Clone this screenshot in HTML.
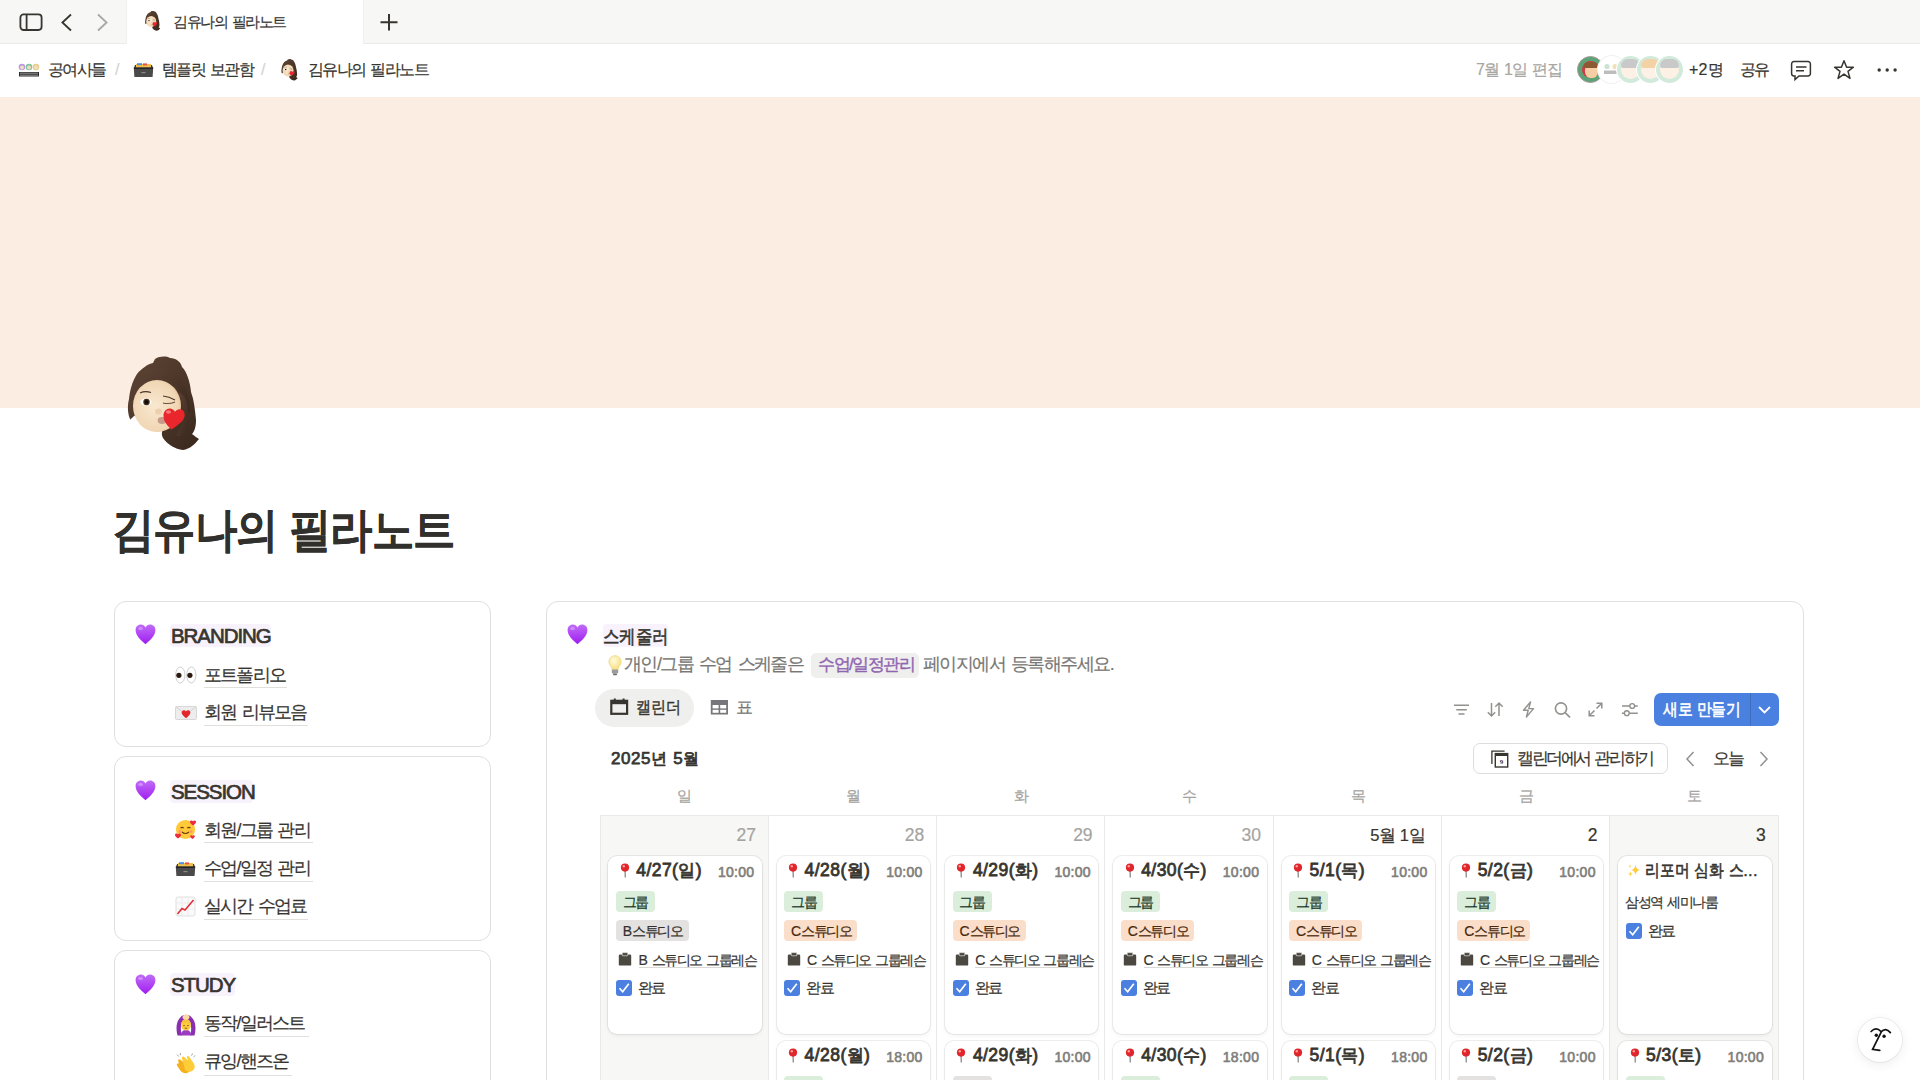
<!DOCTYPE html>
<html lang="ko">
<head>
<meta charset="utf-8">
<title>김유나의 필라노트</title>
<style>
*{box-sizing:border-box;margin:0;padding:0}
html,body{width:1920px;height:1080px;overflow:hidden;background:#fff}
body{font-family:"Liberation Sans",sans-serif;color:#37352f;position:relative}
.a{position:absolute;display:block}
.t{position:absolute;white-space:nowrap;line-height:1}
.ko{letter-spacing:-0.1em;word-spacing:0.12em}
.t{-webkit-text-stroke-width:0.2px}
.sb{-webkit-text-stroke-width:0.6px}
.md{-webkit-text-stroke-width:0.4px}
.b{font-weight:700}
.box{position:absolute;border:1px solid #e0dfdd;border-radius:12px;background:#fff}
.lat{letter-spacing:0}
.ul{position:absolute;height:1px;background:#dedcd9}
.card{position:absolute;background:#fff;border-radius:9px;box-shadow:0 0 0 1px rgba(15,15,15,.07),0 2px 4px rgba(15,15,15,.05)}
.tag{position:absolute;border-radius:4px}
</style>
</head>
<body>

<div class="a" style="left:0.0px;top:0.0px;width:1920.0px;height:44.0px;background:#f7f7f5;border-bottom:1px solid #ebebe9"></div>
<div class="a" style="left:126.0px;top:0.0px;width:238.0px;height:44.0px;background:#fff;border-left:1px solid #efefed;border-right:1px solid #efefed"></div>
<svg class="a" style="left:19.0px;top:13.0px;" width="25" height="19" viewBox="0 0 25 19"><rect x="1.4" y="1.4" width="21.2" height="15.6" rx="3.2" fill="none" stroke="#37352f" stroke-width="1.8"/><line x1="7.6" y1="1.4" x2="7.6" y2="17" stroke="#37352f" stroke-width="1.8"/></svg>
<svg class="a" style="left:60.0px;top:13.0px;" width="14" height="19" viewBox="0 0 14 19"><path d="M11 1.5 L2.4 9.5 L11 17.5" fill="none" stroke="#37352f" stroke-width="1.8"/></svg>
<svg class="a" style="left:95.0px;top:13.0px;" width="14" height="19" viewBox="0 0 14 19"><path d="M3 1.5 L11.6 9.5 L3 17.5" fill="none" stroke="#a9a8a5" stroke-width="1.8"/></svg>
<svg class="a" style="left:143.0px;top:10.0px;" width="19" height="22" viewBox="0 0 90 104"><defs><radialGradient id="fc" cx=".45" cy=".5" r=".6"><stop offset="0" stop-color="#f9e8d0"/><stop offset=".8" stop-color="#f0d6b4"/><stop offset="1" stop-color="#e2b98e"/></radialGradient><linearGradient id="hr" x1="0" y1="0" x2="1" y2="1"><stop offset="0" stop-color="#5e4535"/><stop offset="1" stop-color="#3a281d"/></linearGradient></defs><path d="M37 7C42 4 48 4 52 6 58 6 63 10 64 15 69 20 72 30 73 40 76 48 77 58 78 68 78 76 76 80 74 82 77 84 79 86 81 87 77 92 72 97 65 98 57 97 50 93 45 86 43 82 44 78 46 75L40 60 16 64C13 67 12 68 12 67 10 62 9 55 11 47 12 38 14 30 19 22 24 16 30 12 35 11Z" fill="url(#hr)"/><ellipse cx="39" cy="54" rx="24" ry="26" fill="url(#fc)"/><path d="M14 46C16 34 24 27 34 26 46 25 56 30 62 40 66 48 67 56 67 62 L72 60C72 46 68 32 60 24 52 16 40 14 30 17 20 21 14 32 14 46Z" fill="url(#hr)"/><path d="M60 40C64 48 66 58 64 70 63 76 60 80 58 84 L66 84C70 76 71 66 70 56 69 48 66 42 60 40Z" fill="url(#hr)"/><path d="M22 41Q27 38.5 33 40.5" stroke="#4a3628" stroke-width="1.1" fill="none"/><path d="M45 44Q51 44.5 57 48" stroke="#4a3628" stroke-width="1.1" fill="none"/><ellipse cx="28" cy="50" rx="5.6" ry="3.6" fill="#fff"/><circle cx="28.5" cy="50" r="3.2" fill="#3b2a1c"/><circle cx="28.5" cy="50" r="1.8" fill="#0d0906"/><path d="M45 51Q51 52.5 57 50" stroke="#6a5040" stroke-width="1.1" fill="none"/><ellipse cx="40.5" cy="59.5" rx="3.4" ry="3" fill="#ecd0ae"/><ellipse cx="44" cy="68.5" rx="4.3" ry="3.4" fill="#c79a8a"/><path d="M53.5 77.5C47.5 72 45.5 68.5 45.5 63.5 45.5 59.5 48.3 56.5 51.8 56.5c2.3 0 4.1 1.3 5.2 3.2C58.2 58 60.2 57 62.3 57.3 65.3 57.8 67.2 60.6 66.6 64 65.8 69 61 72.5 53.5 77.5z" fill="#e8262c"/><ellipse cx="50.5" cy="60" rx="2.6" ry="1.7" fill="#ff9090" opacity=".75"/></svg>
<div class="t ko" style="left:173.0px;top:14.5px;font-size:14.6px;letter-spacing:-0.1em">김유나의 필라노트</div>
<svg class="a" style="left:379.0px;top:12.0px;" width="20" height="20" viewBox="0 0 20 20"><path d="M10 2V18.5M1.5 10.2H18.5" stroke="#37352f" stroke-width="2"/></svg>
<svg class="a" style="left:18.0px;top:63.0px;" width="22" height="14" viewBox="0 0 22 14"><circle cx="4" cy="4" r="3.3" fill="#b99be0"/><circle cx="11" cy="4" r="3.3" fill="#7fc69a"/><circle cx="18" cy="4" r="3.3" fill="#e8cf8a"/><circle cx="4" cy="4.6" r="2" fill="#f3dcc4"/><circle cx="11" cy="4.6" r="2" fill="#f3dcc4"/><circle cx="18" cy="4.6" r="2" fill="#f3dcc4"/><rect x="1" y="9" width="20" height="4.5" fill="#2d2d2d"/><path d="M2 10.2H20M2 12.2H20" stroke="#fff" stroke-width=".5"/></svg>
<div class="t ko" style="left:48.0px;top:61.5px;font-size:16px;">공여사들</div>
<div class="t " style="left:115.0px;top:61.5px;font-size:16px;color:#d5d4d0">/</div>
<svg class="a" style="left:133.0px;top:61.0px;" width="21" height="17" viewBox="0 0 21 17"><path d="M2 4 L19 4 L20 7 L1 7Z" fill="#3a3a3a"/><rect x="3" y="3" width="15" height="4" fill="#f1c04a"/><rect x="4" y="2.2" width="5" height="2" fill="#4b8fe0"/><rect x="10" y="2.4" width="4" height="2" fill="#e2544b"/><path d="M0.8 6.5 L20.2 6.5 L19.6 16 L1.4 16Z" fill="#4a4a4a"/><path d="M0.8 6.5 L20.2 6.5 L20 8 L1 8Z" fill="#262626"/><rect x="8.5" y="11" width="4" height="1.2" fill="#8a8a8a"/></svg>
<div class="t ko" style="left:162.0px;top:61.5px;font-size:16px;">템플릿 보관함</div>
<div class="t " style="left:261.0px;top:61.5px;font-size:16px;color:#d5d4d0">/</div>
<svg class="a" style="left:279.0px;top:58.0px;" width="21" height="24" viewBox="0 0 90 104"><defs><radialGradient id="fc" cx=".45" cy=".5" r=".6"><stop offset="0" stop-color="#f9e8d0"/><stop offset=".8" stop-color="#f0d6b4"/><stop offset="1" stop-color="#e2b98e"/></radialGradient><linearGradient id="hr" x1="0" y1="0" x2="1" y2="1"><stop offset="0" stop-color="#5e4535"/><stop offset="1" stop-color="#3a281d"/></linearGradient></defs><path d="M37 7C42 4 48 4 52 6 58 6 63 10 64 15 69 20 72 30 73 40 76 48 77 58 78 68 78 76 76 80 74 82 77 84 79 86 81 87 77 92 72 97 65 98 57 97 50 93 45 86 43 82 44 78 46 75L40 60 16 64C13 67 12 68 12 67 10 62 9 55 11 47 12 38 14 30 19 22 24 16 30 12 35 11Z" fill="url(#hr)"/><ellipse cx="39" cy="54" rx="24" ry="26" fill="url(#fc)"/><path d="M14 46C16 34 24 27 34 26 46 25 56 30 62 40 66 48 67 56 67 62 L72 60C72 46 68 32 60 24 52 16 40 14 30 17 20 21 14 32 14 46Z" fill="url(#hr)"/><path d="M60 40C64 48 66 58 64 70 63 76 60 80 58 84 L66 84C70 76 71 66 70 56 69 48 66 42 60 40Z" fill="url(#hr)"/><path d="M22 41Q27 38.5 33 40.5" stroke="#4a3628" stroke-width="1.1" fill="none"/><path d="M45 44Q51 44.5 57 48" stroke="#4a3628" stroke-width="1.1" fill="none"/><ellipse cx="28" cy="50" rx="5.6" ry="3.6" fill="#fff"/><circle cx="28.5" cy="50" r="3.2" fill="#3b2a1c"/><circle cx="28.5" cy="50" r="1.8" fill="#0d0906"/><path d="M45 51Q51 52.5 57 50" stroke="#6a5040" stroke-width="1.1" fill="none"/><ellipse cx="40.5" cy="59.5" rx="3.4" ry="3" fill="#ecd0ae"/><ellipse cx="44" cy="68.5" rx="4.3" ry="3.4" fill="#c79a8a"/><path d="M53.5 77.5C47.5 72 45.5 68.5 45.5 63.5 45.5 59.5 48.3 56.5 51.8 56.5c2.3 0 4.1 1.3 5.2 3.2C58.2 58 60.2 57 62.3 57.3 65.3 57.8 67.2 60.6 66.6 64 65.8 69 61 72.5 53.5 77.5z" fill="#e8262c"/><ellipse cx="50.5" cy="60" rx="2.6" ry="1.7" fill="#ff9090" opacity=".75"/></svg>
<div class="t ko" style="left:308.0px;top:61.5px;font-size:16px;">김유나의 필라노트</div>
<div class="t ko" style="left:1476.0px;top:61.5px;font-size:16px;color:#a7a6a2;letter-spacing:-0.07em">7월 1일 편집</div>
<div class="a" style="left:1577px;top:56px;width:27px;height:27px;border-radius:50%;background:#5aa477;border:1px solid #a99;overflow:hidden"><div class="a" style="left:4px;top:4px;width:17px;height:17px;border-radius:50%;background:#d13a44"></div><div class="a" style="left:7px;top:7px;width:13px;height:14px;border-radius:45%;background:#f5cfa3"></div><div class="a" style="left:6px;top:5px;width:14px;height:6px;border-radius:6px 6px 2px 2px;background:#8b5a33"></div></div>
<div class="a" style="left:1598px;top:56px;width:27px;height:27px;border-radius:50%;background:#fff;box-shadow:0 0 0 1px #f0f0f0"></div>
<svg class="a" style="left:1603.0px;top:63.0px;" width="17" height="12" viewBox="0 0 17 12"><circle cx="4" cy="3.5" r="2.6" fill="#cde3d2"/><circle cx="12" cy="3.5" r="2.6" fill="#efe2b8"/><rect x="1" y="7.5" width="15" height="3.5" fill="#bdbdbd"/></svg>
<div class="a" style="left:1617.1px;top:56px;width:27px;height:27px;border-radius:50%;background:#d2eadb;box-shadow:0 0 0 1px #fff"><div class="a" style="left:4px;top:4px;width:19px;height:19px;border-radius:50%;background:#fdf1e6"></div><div class="a" style="left:4px;top:3px;width:19px;height:9px;border-radius:9px 9px 3px 3px;background:#c9c9c9"></div></div>
<div class="a" style="left:1636.6px;top:56px;width:27px;height:27px;border-radius:50%;background:#d2eadb;box-shadow:0 0 0 1px #fff"><div class="a" style="left:4px;top:4px;width:19px;height:19px;border-radius:50%;background:#fdf1e6"></div><div class="a" style="left:4px;top:3px;width:19px;height:9px;border-radius:9px 9px 3px 3px;background:#f3d2a6"></div></div>
<div class="a" style="left:1656.1px;top:56px;width:27px;height:27px;border-radius:50%;background:#d2eadb;box-shadow:0 0 0 1px #fff"><div class="a" style="left:4px;top:4px;width:19px;height:19px;border-radius:50%;background:#fdf1e6"></div><div class="a" style="left:4px;top:3px;width:19px;height:9px;border-radius:9px 9px 3px 3px;background:#c9c9c9"></div></div>
<div class="t ko" style="left:1689.0px;top:61.5px;font-size:16px;letter-spacing:0.01em">+2명</div>
<div class="t ko" style="left:1740.0px;top:61.5px;font-size:16px;">공유</div>
<svg class="a" style="left:1790.0px;top:60.0px;" width="22" height="22" viewBox="0 0 22 22"><path d="M4 1.6H18a2.4 2.4 0 0 1 2.4 2.4V13.6A2.4 2.4 0 0 1 18 16H9L5 19.6V16H4A2.4 2.4 0 0 1 1.6 13.6V4A2.4 2.4 0 0 1 4 1.6Z" fill="none" stroke="#37352f" stroke-width="1.5"/><path d="M6 7H16.5M6 10.8H14" stroke="#37352f" stroke-width="1.5"/></svg>
<svg class="a" style="left:1833.0px;top:59.0px;" width="22" height="22" viewBox="0 0 22 22"><path d="M11 1.8L13.6 8.2H20.4L15 12.4L17 19.4L11 15.2L5 19.4L7 12.4L1.6 8.2H8.4Z" fill="none" stroke="#37352f" stroke-width="1.5" stroke-linejoin="round"/></svg>
<svg class="a" style="left:1875.0px;top:66.0px;" width="24" height="8" viewBox="0 0 24 8"><circle cx="4.2" cy="4" r="1.7" fill="#37352f"/><circle cx="12.2" cy="4" r="1.7" fill="#37352f"/><circle cx="20.1" cy="4" r="1.7" fill="#37352f"/></svg>
<div class="a" style="left:0.0px;top:97.0px;width:1920.0px;height:311.0px;background:#fcede2"></div>
<svg class="a" style="left:118.0px;top:352.0px;" width="90" height="104" viewBox="0 0 90 104"><defs><radialGradient id="fc" cx=".45" cy=".5" r=".6"><stop offset="0" stop-color="#f9e8d0"/><stop offset=".8" stop-color="#f0d6b4"/><stop offset="1" stop-color="#e2b98e"/></radialGradient><linearGradient id="hr" x1="0" y1="0" x2="1" y2="1"><stop offset="0" stop-color="#5e4535"/><stop offset="1" stop-color="#3a281d"/></linearGradient></defs><path d="M37 7C42 4 48 4 52 6 58 6 63 10 64 15 69 20 72 30 73 40 76 48 77 58 78 68 78 76 76 80 74 82 77 84 79 86 81 87 77 92 72 97 65 98 57 97 50 93 45 86 43 82 44 78 46 75L40 60 16 64C13 67 12 68 12 67 10 62 9 55 11 47 12 38 14 30 19 22 24 16 30 12 35 11Z" fill="url(#hr)"/><ellipse cx="39" cy="54" rx="24" ry="26" fill="url(#fc)"/><path d="M14 46C16 34 24 27 34 26 46 25 56 30 62 40 66 48 67 56 67 62 L72 60C72 46 68 32 60 24 52 16 40 14 30 17 20 21 14 32 14 46Z" fill="url(#hr)"/><path d="M60 40C64 48 66 58 64 70 63 76 60 80 58 84 L66 84C70 76 71 66 70 56 69 48 66 42 60 40Z" fill="url(#hr)"/><path d="M22 41Q27 38.5 33 40.5" stroke="#4a3628" stroke-width="1.1" fill="none"/><path d="M45 44Q51 44.5 57 48" stroke="#4a3628" stroke-width="1.1" fill="none"/><ellipse cx="28" cy="50" rx="5.6" ry="3.6" fill="#fff"/><circle cx="28.5" cy="50" r="3.2" fill="#3b2a1c"/><circle cx="28.5" cy="50" r="1.8" fill="#0d0906"/><path d="M45 51Q51 52.5 57 50" stroke="#6a5040" stroke-width="1.1" fill="none"/><ellipse cx="40.5" cy="59.5" rx="3.4" ry="3" fill="#ecd0ae"/><ellipse cx="44" cy="68.5" rx="4.3" ry="3.4" fill="#c79a8a"/><path d="M53.5 77.5C47.5 72 45.5 68.5 45.5 63.5 45.5 59.5 48.3 56.5 51.8 56.5c2.3 0 4.1 1.3 5.2 3.2C58.2 58 60.2 57 62.3 57.3 65.3 57.8 67.2 60.6 66.6 64 65.8 69 61 72.5 53.5 77.5z" fill="#e8262c"/><ellipse cx="50.5" cy="60" rx="2.6" ry="1.7" fill="#ff9090" opacity=".75"/></svg>
<div class="t b" style="left:112.0px;top:506.0px;font-size:47px;color:#32302c;letter-spacing:-0.02em;transform:scaleX(0.9);transform-origin:0 50%">김유나의 필라노트</div>
<div class="box" style="left:114px;top:601px;width:377px;height:146px"></div>
<div class="box" style="left:114px;top:756px;width:377px;height:185px"></div>
<div class="box" style="left:114px;top:950px;width:377px;height:200px"></div>
<svg class="a" style="left:134.5px;top:624.0px;" width="21" height="21" viewBox="0 0 21 21"><defs><linearGradient id="gp" x1="0" y1="0" x2="0" y2="1"><stop offset="0" stop-color="#c06cf7"/><stop offset="1" stop-color="#a01cf0"/></linearGradient></defs><path d="M10.5 20.3C4.3 14.8 0.6 11.2 0.6 6.1 0.6 2.9 3 0.6 5.9 0.6c2.1 0 3.7 1.1 4.6 2.9C11.4 1.7 13 0.6 15.1 0.6c2.9 0 5.3 2.3 5.3 5.5 0 5.1-3.7 8.7-9.9 14.2z" fill="url(#gp)"/><ellipse cx="5.6" cy="4.6" rx="2.4" ry="1.5" fill="#e3b8ff" opacity=".55"/></svg>
<div class="a" style="left:170.0px;top:624.0px;width:101.0px;height:23.0px;background:#f7f2fb;border-radius:4px"></div>
<div class="t sb" style="left:171.0px;top:625.8px;font-size:20.5px;letter-spacing:-0.052em;-webkit-text-stroke-width:0.7px">BRANDING</div>
<svg class="a" style="left:175.0px;top:666.0px;" width="22" height="18" viewBox="0 0 22 18"><ellipse cx="5.3" cy="9" rx="4.6" ry="8" fill="#fff" stroke="#cfcfcf" stroke-width="1"/><ellipse cx="16.3" cy="9" rx="4.6" ry="8" fill="#fff" stroke="#cfcfcf" stroke-width="1"/><circle cx="3.9" cy="9.3" r="2.6" fill="#2a1a10"/><circle cx="14.9" cy="9.3" r="2.6" fill="#2a1a10"/></svg>
<div class="t ko" style="left:204.0px;top:665.5px;font-size:18px;">포트폴리오</div>
<div class="a" style="left:204.0px;top:687.0px;width:83.0px;height:1.0px;background:#e0dfdc"></div>
<svg class="a" style="left:175.0px;top:706.0px;" width="22" height="14" viewBox="0 0 22 14"><rect x="0.5" y="0.5" width="21" height="13" rx="1" fill="#ededed" stroke="#d7d7d7"/><path d="M0.8 0.8 11 8 21.2 0.8" fill="none" stroke="#d0d0d0"/><path d="M11 12.2C8 9.8 6.6 8.5 6.6 6.6 6.6 5.3 7.6 4.3 8.8 4.3c0.9 0 1.7 0.5 2.2 1.3 0.5-0.8 1.3-1.3 2.2-1.3 1.2 0 2.2 1 2.2 2.3 0 1.9-1.4 3.2-4.4 5.6z" fill="#e3252c"/></svg>
<div class="t ko" style="left:204.0px;top:703.0px;font-size:18px;">회원 리뷰모음</div>
<div class="a" style="left:204.0px;top:725.0px;width:104.0px;height:1.0px;background:#e0dfdc"></div>
<svg class="a" style="left:134.5px;top:780.0px;" width="21" height="21" viewBox="0 0 21 21"><defs><linearGradient id="gp" x1="0" y1="0" x2="0" y2="1"><stop offset="0" stop-color="#c06cf7"/><stop offset="1" stop-color="#a01cf0"/></linearGradient></defs><path d="M10.5 20.3C4.3 14.8 0.6 11.2 0.6 6.1 0.6 2.9 3 0.6 5.9 0.6c2.1 0 3.7 1.1 4.6 2.9C11.4 1.7 13 0.6 15.1 0.6c2.9 0 5.3 2.3 5.3 5.5 0 5.1-3.7 8.7-9.9 14.2z" fill="url(#gp)"/><ellipse cx="5.6" cy="4.6" rx="2.4" ry="1.5" fill="#e3b8ff" opacity=".55"/></svg>
<div class="a" style="left:170.0px;top:780.0px;width:83.0px;height:23.0px;background:#f7f2fb;border-radius:4px"></div>
<div class="t sb" style="left:171.0px;top:781.8px;font-size:20.5px;letter-spacing:-0.052em;-webkit-text-stroke-width:0.7px">SESSION</div>
<svg class="a" style="left:175.0px;top:819.0px;" width="21" height="21" viewBox="0 0 21 21"><circle cx="10.5" cy="10.5" r="9.6" fill="#ffc93a"/><path d="M5.5 9.2q1.6-1.6 3.2 0M12.3 9.2q1.6-1.6 3.2 0" stroke="#6b3e12" stroke-width="1.2" fill="none"/><path d="M7 13q3.5 3 7 0" stroke="#6b3e12" stroke-width="1.2" fill="none"/><circle cx="5" cy="12.5" r="1.6" fill="#ff8a7a" opacity=".7"/><circle cx="16" cy="12.5" r="1.6" fill="#ff8a7a" opacity=".7"/><path d="M3 19.5C1 18 0 17 0 15.8 0 15 .6 14.4 1.4 14.4c.6 0 1.1.3 1.6.9.5-.6 1-.9 1.6-.9.8 0 1.4.6 1.4 1.4 0 1.2-1 2.2-3 3.7z" fill="#ee2a3c"/><path d="M18 6.5C16 5 15 4 15 2.8 15 2 15.6 1.4 16.4 1.4c.6 0 1.1.3 1.6.9.5-.6 1-.9 1.6-.9.8 0 1.4.6 1.4 1.4 0 1.2-1 2.2-3 3.7z" fill="#ee2a3c"/><path d="M17.5 20C16 19 15.2 18.2 15.2 17.3c0-.6.5-1.1 1.1-1.1.5 0 .9.3 1.2.7.3-.4.7-.7 1.2-.7.6 0 1.1.5 1.1 1.1 0 .9-.8 1.7-2.3 2.7z" fill="#ee2a3c"/></svg>
<div class="t ko" style="left:204.0px;top:820.5px;font-size:18px;">회원/그룹 관리</div>
<div class="a" style="left:204.0px;top:842.0px;width:109.0px;height:1.0px;background:#e0dfdc"></div>
<svg class="a" style="left:175.0px;top:860.0px;" width="21" height="17" viewBox="0 0 21 17"><path d="M2 4 L19 4 L20 7 L1 7Z" fill="#3a3a3a"/><rect x="3" y="3" width="15" height="4" fill="#f1c04a"/><rect x="4" y="2.2" width="5" height="2" fill="#4b8fe0"/><rect x="10" y="2.4" width="4" height="2" fill="#e2544b"/><path d="M0.8 6.5 L20.2 6.5 L19.6 16 L1.4 16Z" fill="#4a4a4a"/><path d="M0.8 6.5 L20.2 6.5 L20 8 L1 8Z" fill="#262626"/><rect x="8.5" y="11" width="4" height="1.2" fill="#8a8a8a"/></svg>
<div class="t ko" style="left:204.0px;top:859.0px;font-size:18px;">수업/일정 관리</div>
<div class="a" style="left:204.0px;top:881.0px;width:109.0px;height:1.0px;background:#e0dfdc"></div>
<svg class="a" style="left:175.0px;top:896.0px;" width="21" height="21" viewBox="0 0 21 21"><rect x="1" y="1" width="19" height="19" rx="2" fill="#fafafa" stroke="#d9d9d9" stroke-width=".8"/><path d="M1 7H20M1 13H20M7 1V20M13 1V20" stroke="#e6e6e6" stroke-width=".6"/><path d="M2.5 18 L7 12.5 L10 14 L18.5 4" stroke="#e0313b" stroke-width="1.6" fill="none"/></svg>
<div class="t ko" style="left:204.0px;top:897.0px;font-size:18px;">실시간 수업료</div>
<div class="a" style="left:204.0px;top:919.0px;width:104.0px;height:1.0px;background:#e0dfdc"></div>
<svg class="a" style="left:134.5px;top:974.0px;" width="21" height="21" viewBox="0 0 21 21"><defs><linearGradient id="gp" x1="0" y1="0" x2="0" y2="1"><stop offset="0" stop-color="#c06cf7"/><stop offset="1" stop-color="#a01cf0"/></linearGradient></defs><path d="M10.5 20.3C4.3 14.8 0.6 11.2 0.6 6.1 0.6 2.9 3 0.6 5.9 0.6c2.1 0 3.7 1.1 4.6 2.9C11.4 1.7 13 0.6 15.1 0.6c2.9 0 5.3 2.3 5.3 5.5 0 5.1-3.7 8.7-9.9 14.2z" fill="url(#gp)"/><ellipse cx="5.6" cy="4.6" rx="2.4" ry="1.5" fill="#e3b8ff" opacity=".55"/></svg>
<div class="a" style="left:170.0px;top:973.0px;width:65.0px;height:23.0px;background:#f7f2fb;border-radius:4px"></div>
<div class="t sb" style="left:171.0px;top:974.8px;font-size:20.5px;letter-spacing:-0.052em;-webkit-text-stroke-width:0.7px">STUDY</div>
<svg class="a" style="left:174.5px;top:1013.5px;" width="22" height="22" viewBox="0 0 22 22"><path d="M2.5 21.5C1 16 1 9 4 5 6.5 1.5 9 .8 11 .8S15.5 1.5 18 5C21 9 21 16 19.5 21.5H15.5C16.5 16 16.5 10 14.5 7 13.5 5.6 12.3 5 11 5S8.5 5.6 7.5 7C5.5 10 5.5 16 6.5 21.5Z" fill="#8a2fb0"/><path d="M5.5 21.5Q6 16 11 16Q16 16 16.5 21.5Z" fill="#9b3cc2"/><ellipse cx="11" cy="3.2" rx="3.4" ry="2.4" fill="#ffd9a0"/><path d="M6.2 12Q6 5.5 11 5.5Q16 5.5 15.8 12Q15.5 16 11 16.5Q6.5 16 6.2 12Z" fill="#ffcc3d"/><path d="M6.3 10.5Q6.5 5.6 11 5.6Q15.5 5.6 15.7 10.5Q13.5 8 11 8.3Q8.5 8 6.3 10.5Z" fill="#f7c237"/><path d="M8.3 11.6H9.8M12.2 11.6H13.7M9.8 14.2H12.2" stroke="#6b4a1a" stroke-width=".9"/></svg>
<div class="t ko" style="left:204.0px;top:1013.5px;font-size:18px;">동작/일러스트</div>
<div class="a" style="left:204.0px;top:1036.0px;width:105.0px;height:1.0px;background:#e0dfdc"></div>
<svg class="a" style="left:174.5px;top:1051.5px;" width="22" height="22" viewBox="0 0 22 22"><path d="M3.5 9.5C2.5 8.5 3.5 6.8 5 7.5L9 10.5 7.5 7C7 5.5 8.8 4.8 9.6 6L14.5 12.5C16.5 15.5 16 18.5 13.5 20.3 11 22 7.5 21.3 5.5 18.8L2 13.5C1.2 12.3 2.6 11 3.6 11.8Z" fill="#f5b01e"/><path d="M7 6.5C6.5 5 8 4 9.2 5L13 8.5 12 5.5C11.5 4 13.3 3.4 14 4.6L18.5 11C20.5 14 20 17 17.5 18.8 15 20.5 12 19.8 10 17.5Z" fill="#ffcd3a"/><path d="M2.2 2.5L3.6 4.4M5.2 1L5.6 3.2M17.5 1.5L16.6 3.6M20.3 3.5L18.6 4.8" stroke="#8a8a8a" stroke-width=".8"/></svg>
<div class="t ko" style="left:204.0px;top:1052.0px;font-size:18px;">큐잉/핸즈온</div>
<div class="a" style="left:204.0px;top:1075.0px;width:88.0px;height:1.0px;background:#e0dfdc"></div>
<div class="box" style="left:546px;top:601px;width:1258px;height:600px"></div>
<svg class="a" style="left:566.5px;top:624.0px;" width="21" height="21" viewBox="0 0 21 21"><defs><linearGradient id="gp" x1="0" y1="0" x2="0" y2="1"><stop offset="0" stop-color="#c06cf7"/><stop offset="1" stop-color="#a01cf0"/></linearGradient></defs><path d="M10.5 20.3C4.3 14.8 0.6 11.2 0.6 6.1 0.6 2.9 3 0.6 5.9 0.6c2.1 0 3.7 1.1 4.6 2.9C11.4 1.7 13 0.6 15.1 0.6c2.9 0 5.3 2.3 5.3 5.5 0 5.1-3.7 8.7-9.9 14.2z" fill="url(#gp)"/><ellipse cx="5.6" cy="4.6" rx="2.4" ry="1.5" fill="#e3b8ff" opacity=".55"/></svg>
<div class="a" style="left:603.0px;top:624.0px;width:65.0px;height:22.5px;background:#f7f2fb;border-radius:4px"></div>
<div class="t sb" style="left:603.0px;top:626.5px;font-size:19px;letter-spacing:0;transform-origin:0 50%;transform:scaleX(0.865)">스케줄러</div>
<svg class="a" style="left:607.5px;top:655.0px;" width="14" height="21" viewBox="0 0 14 21"><defs><radialGradient id="bg1" cx=".4" cy=".35" r=".7"><stop offset="0" stop-color="#fffbe0"/><stop offset="1" stop-color="#f7df7c"/></radialGradient></defs><path d="M7 0.7C3.5 0.7 0.9 3.3 0.9 6.7c0 2.6 1.6 4 2.4 5.3.5.9.6 1.7.6 2.6h6.2c0-.9.1-1.7.6-2.6.8-1.3 2.4-2.7 2.4-5.3C13.1 3.3 10.5.7 7 .7z" fill="url(#bg1)" stroke="#e9cf6a" stroke-width=".6"/><rect x="3.8" y="14.6" width="6.4" height="4" rx="1" fill="#9b9b9b"/><rect x="5" y="18.4" width="4" height="1.8" rx=".8" fill="#6d6d6d"/></svg>
<div class="t ko" style="left:624.0px;top:655.3px;font-size:18px;color:#787774;letter-spacing:-0.085em">개인/그룹 수업 스케줄은</div>
<div class="a" style="left:811.0px;top:653.0px;width:108.0px;height:25.0px;background:#efefed;border-radius:5px"></div>
<div class="t ko md" style="left:818.0px;top:656.3px;font-size:17px;color:#9065b0;letter-spacing:-0.085em">수업/일정관리</div>
<div class="t ko" style="left:923.0px;top:655.3px;font-size:18px;color:#787774;letter-spacing:-0.085em">페이지에서 등록해주세요.</div>
<div class="a" style="left:595.0px;top:689.0px;width:99.0px;height:38.0px;background:#efefee;border-radius:19px"></div>
<svg class="a" style="left:610.0px;top:698.0px;" width="19" height="17" viewBox="0 0 19 17"><rect x="1.3" y="2.8" width="15.8" height="13" fill="none" stroke="#37352f" stroke-width="2.2"/><rect x="1.3" y="2.8" width="15.8" height="3.4" fill="#37352f"/><path d="M4.8 0.5V3M13.6 0.5V3" stroke="#37352f" stroke-width="2"/></svg>
<div class="t md" style="left:636.0px;top:699.0px;font-size:17px;letter-spacing:0;transform-origin:0 50%;transform:scaleX(0.885)">캘린더</div>
<svg class="a" style="left:710.0px;top:699.0px;" width="19" height="17" viewBox="0 0 19 17"><rect x="0.8" y="1" width="17.2" height="14.5" fill="#77767a"/><rect x="2.6" y="6" width="6" height="3.4" fill="#fff"/><rect x="10.2" y="6" width="6" height="3.4" fill="#fff"/><rect x="2.6" y="10.8" width="6" height="3" fill="#fff"/><rect x="10.2" y="10.8" width="6" height="3" fill="#fff"/></svg>
<div class="t ko" style="left:736.0px;top:699.0px;font-size:17px;color:#787774">표</div>
<svg class="a" style="left:1452.0px;top:701.0px;" width="19" height="16" viewBox="0 0 19 16"><path d="M2 4.2H17M4.3 8.7H14.8M6.5 13.1H12.5" stroke="#91918e" stroke-width="1.5"/></svg>
<svg class="a" style="left:1486.0px;top:701.0px;" width="19" height="17" viewBox="0 0 19 17"><path d="M5.5 2V15M1.8 11.3L5.5 15L9.2 11.3M13 15V2M9.3 5.7L13 2L16.7 5.7" stroke="#91918e" stroke-width="1.5" fill="none"/></svg>
<svg class="a" style="left:1521.0px;top:701.0px;" width="15" height="17" viewBox="0 0 15 17"><path d="M9.5 1L2.5 9.2H7.2L5.4 16L12.5 7.6H7.8Z" fill="none" stroke="#91918e" stroke-width="1.4" stroke-linejoin="round"/></svg>
<svg class="a" style="left:1553.0px;top:700.0px;" width="19" height="19" viewBox="0 0 19 19"><circle cx="8" cy="8.5" r="5.6" fill="none" stroke="#91918e" stroke-width="1.6"/><path d="M12.1 12.6L17 17.3" stroke="#91918e" stroke-width="1.6"/></svg>
<svg class="a" style="left:1587.0px;top:701.0px;" width="17" height="17" viewBox="0 0 17 17"><path d="M9.5 2.2H14.8V7.5M14.8 2.2L9.5 7.5M7.5 14.8H2.2V9.5M2.2 14.8L7.5 9.5" stroke="#91918e" stroke-width="1.5" fill="none"/></svg>
<svg class="a" style="left:1620.0px;top:700.0px;" width="20" height="18" viewBox="0 0 20 18"><path d="M2 6H17.8M2 13.2H17.8" stroke="#91918e" stroke-width="1.5"/><circle cx="12.2" cy="6" r="2.4" fill="#fff" stroke="#91918e" stroke-width="1.4"/><circle cx="6.8" cy="13.2" r="2.4" fill="#fff" stroke="#91918e" stroke-width="1.4"/></svg>
<div class="a" style="left:1654.0px;top:693.0px;width:125.0px;height:33.0px;background:#4a80df;border-radius:7px"></div>
<div class="a" style="left:1750.0px;top:693.0px;width:1.0px;height:33.0px;background:rgba(0,0,0,.14)"></div>
<div class="t sb" style="left:1663.0px;top:701.0px;font-size:17px;color:#fff;letter-spacing:0;transform-origin:0 50%;transform:scaleX(0.87)">새로 만들기</div>
<svg class="a" style="left:1757.0px;top:703.0px;" width="15" height="13" viewBox="0 0 15 13"><path d="M2 4L7.5 9.5L13 4" stroke="#fff" stroke-width="1.8" fill="none"/></svg>
<div class="t sb" style="left:611.0px;top:749.5px;font-size:17px;letter-spacing:0.03em;word-spacing:0.05em;-webkit-text-stroke-width:0.75px">2025<span style="font-size:16px;letter-spacing:0.02em">년</span> 5<span style="font-size:16px">월</span></div>
<div class="a" style="left:1473.0px;top:743.0px;width:195.0px;height:31.0px;border:1px solid #dedddb;border-radius:7px;background:#fff"></div>
<svg class="a" style="left:1488.0px;top:748.0px;" width="22" height="22" viewBox="0 0 22 22"><path d="M3.9 16V3.1H16.6" stroke="#37352f" stroke-width="1.3" fill="none"/><rect x="7.3" y="5.6" width="12.4" height="13.4" fill="#fff" stroke="#37352f" stroke-width="1.4"/><rect x="7.3" y="5.4" width="12.4" height="2.6" fill="#37352f"/><text x="13.5" y="15.8" font-size="7" font-weight="700" text-anchor="middle" fill="#37352f" font-family="Liberation Serif">9</text></svg>
<div class="t ko" style="left:1517.0px;top:749.8px;font-size:17px;letter-spacing:-0.14em">캘린더에서 관리하기</div>
<svg class="a" style="left:1684.0px;top:750.0px;" width="12" height="18" viewBox="0 0 12 18"><path d="M9.5 2L3 9L9.5 16" stroke="#91918e" stroke-width="1.5" fill="none"/></svg>
<div class="t ko" style="left:1713.0px;top:749.8px;font-size:17px;">오늘</div>
<svg class="a" style="left:1758.0px;top:750.0px;" width="12" height="18" viewBox="0 0 12 18"><path d="M2.5 2L9 9L2.5 16" stroke="#91918e" stroke-width="1.5" fill="none"/></svg>
<div class="t ko" style="left:584.1px;width:200px;text-align:center;top:789.2px;font-size:14.5px;color:#a5a4a1">일</div>
<div class="t ko" style="left:752.4px;width:200px;text-align:center;top:789.2px;font-size:14.5px;color:#a5a4a1">월</div>
<div class="t ko" style="left:920.7px;width:200px;text-align:center;top:789.2px;font-size:14.5px;color:#a5a4a1">화</div>
<div class="t ko" style="left:1089.0px;width:200px;text-align:center;top:789.2px;font-size:14.5px;color:#a5a4a1">수</div>
<div class="t ko" style="left:1257.3px;width:200px;text-align:center;top:789.2px;font-size:14.5px;color:#a5a4a1">목</div>
<div class="t ko" style="left:1425.6px;width:200px;text-align:center;top:789.2px;font-size:14.5px;color:#a5a4a1">금</div>
<div class="t ko" style="left:1593.9px;width:200px;text-align:center;top:789.2px;font-size:14.5px;color:#a5a4a1">토</div>
<div class="a" style="left:600.0px;top:815.0px;width:168.3px;height:300.0px;background:#f7f7f5"></div>
<div class="a" style="left:1609.7px;top:815.0px;width:168.3px;height:300.0px;background:#f7f7f5"></div>
<div class="a" style="left:600.0px;top:815.0px;width:1178.0px;height:1.0px;background:#e9e9e7"></div>
<div class="a" style="left:600.0px;top:815.0px;width:1.0px;height:300.0px;background:#e9e9e7"></div>
<div class="a" style="left:768.0px;top:815.0px;width:1.0px;height:300.0px;background:#e9e9e7"></div>
<div class="a" style="left:936.0px;top:815.0px;width:1.0px;height:300.0px;background:#e9e9e7"></div>
<div class="a" style="left:1104.0px;top:815.0px;width:1.0px;height:300.0px;background:#e9e9e7"></div>
<div class="a" style="left:1273.0px;top:815.0px;width:1.0px;height:300.0px;background:#e9e9e7"></div>
<div class="a" style="left:1441.0px;top:815.0px;width:1.0px;height:300.0px;background:#e9e9e7"></div>
<div class="a" style="left:1609.0px;top:815.0px;width:1.0px;height:300.0px;background:#e9e9e7"></div>
<div class="a" style="left:1778.0px;top:815.0px;width:1.0px;height:300.0px;background:#e9e9e7"></div>
<div class="t " style="right:1164.0px;top:826.8px;font-size:17.5px;color:#a5a4a1">27</div>
<div class="t " style="right:995.7px;top:826.8px;font-size:17.5px;color:#a5a4a1">28</div>
<div class="t " style="right:827.4px;top:826.8px;font-size:17.5px;color:#a5a4a1">29</div>
<div class="t " style="right:659.1px;top:826.8px;font-size:17.5px;color:#a5a4a1">30</div>
<div class="t " style="right:495.8px;top:827.2px;font-size:16.5px;color:#37352f">5<span class="ko">월 </span>1<span class="ko">일</span></div>
<div class="t " style="right:322.6px;top:826.8px;font-size:17.5px;color:#37352f">2</div>
<div class="t " style="right:154.3px;top:826.8px;font-size:17.5px;color:#37352f">3</div>
<div class="card" style="left:608.3px;top:855.5px;width:153.5px;height:178.5px"></div>
<svg class="a" style="left:619.8px;top:863.0px;" width="11" height="15" viewBox="0 0 11 15"><line x1="5" y1="6" x2="5.3" y2="14.5" stroke="#8a8a8a" stroke-width="1.3"/><circle cx="5" cy="4.6" r="4.1" fill="#e0262b"/><circle cx="3.8" cy="3.3" r="1.2" fill="#ff9a9a"/></svg>
<div class="t sb" style="left:636.3px;top:861.8px;font-size:17.5px;letter-spacing:0.025em;-webkit-text-stroke-width:0.8px">4/27(<span style="font-size:16.5px;letter-spacing:0.02em">일</span>)</div>
<div class="t sb" style="right:1165.7px;top:864.5px;font-size:14px;color:#7f7e7a;letter-spacing:0.02em">10:00</div>
<div class="a" style="left:615.9px;top:890.7px;width:39.0px;height:21.3px;background:#dbeddb;border-radius:4px"></div>
<div class="t ko" style="left:622.8px;top:894.5px;font-size:14px;color:#1c3829">그룹</div>
<div class="a" style="left:615.9px;top:919.7px;width:73.0px;height:21.1px;background:#e3e2e0;border-radius:4px"></div>
<div class="t " style="left:622.8px;top:923.5px;font-size:14px;color:#32302c">B<span class="ko">스튜디오</span></div>
<svg class="a" style="left:618.3px;top:952.0px;" width="14" height="14" viewBox="0 0 14 14"><rect x="0.8" y="2.6" width="12.4" height="11" rx="1.2" fill="#4b4841"/><rect x="4.2" y="0.6" width="5.6" height="3.2" rx=".8" fill="#4b4841" stroke="#fff" stroke-width=".6"/></svg>
<div class="t " style="left:638.6px;top:952.5px;font-size:14px;letter-spacing:-0.01em">B <span class="ko">스튜디오 그룹레슨</span></div>
<div class="a" style="left:638.6px;top:966.5px;width:117.0px;height:1.0px;background:#d9d8d4"></div>
<svg class="a" style="left:615.9px;top:980.0px;" width="16" height="16" viewBox="0 0 16 16"><rect x="0" y="0" width="16" height="16" rx="3" fill="#4b80e0"/><path d="M3.5 8.3 L6.7 11.8 L12.8 3.8" stroke="#fff" stroke-width="1.7" fill="none"/></svg>
<div class="t ko" style="left:637.9px;top:981.2px;font-size:14.5px;">완료</div>
<div class="card" style="left:776.6px;top:855.5px;width:153.5px;height:178.5px"></div>
<svg class="a" style="left:788.1px;top:863.0px;" width="11" height="15" viewBox="0 0 11 15"><line x1="5" y1="6" x2="5.3" y2="14.5" stroke="#8a8a8a" stroke-width="1.3"/><circle cx="5" cy="4.6" r="4.1" fill="#e0262b"/><circle cx="3.8" cy="3.3" r="1.2" fill="#ff9a9a"/></svg>
<div class="t sb" style="left:804.6px;top:861.8px;font-size:17.5px;letter-spacing:0.025em;-webkit-text-stroke-width:0.8px">4/28(<span style="font-size:16.5px;letter-spacing:0.02em">월</span>)</div>
<div class="t sb" style="right:997.4px;top:864.5px;font-size:14px;color:#7f7e7a;letter-spacing:0.02em">10:00</div>
<div class="a" style="left:784.2px;top:890.7px;width:39.0px;height:21.3px;background:#dbeddb;border-radius:4px"></div>
<div class="t ko" style="left:791.1px;top:894.5px;font-size:14px;color:#1c3829">그룹</div>
<div class="a" style="left:784.2px;top:919.7px;width:73.0px;height:21.1px;background:#fadec9;border-radius:4px"></div>
<div class="t " style="left:791.1px;top:923.5px;font-size:14px;color:#49290e">C<span class="ko">스튜디오</span></div>
<svg class="a" style="left:786.6px;top:952.0px;" width="14" height="14" viewBox="0 0 14 14"><rect x="0.8" y="2.6" width="12.4" height="11" rx="1.2" fill="#4b4841"/><rect x="4.2" y="0.6" width="5.6" height="3.2" rx=".8" fill="#4b4841" stroke="#fff" stroke-width=".6"/></svg>
<div class="t " style="left:806.9px;top:952.5px;font-size:14px;letter-spacing:-0.01em">C <span class="ko">스튜디오 그룹레슨</span></div>
<div class="a" style="left:806.9px;top:966.5px;width:117.0px;height:1.0px;background:#d9d8d4"></div>
<svg class="a" style="left:784.2px;top:980.0px;" width="16" height="16" viewBox="0 0 16 16"><rect x="0" y="0" width="16" height="16" rx="3" fill="#4b80e0"/><path d="M3.5 8.3 L6.7 11.8 L12.8 3.8" stroke="#fff" stroke-width="1.7" fill="none"/></svg>
<div class="t ko" style="left:806.2px;top:981.2px;font-size:14.5px;">완료</div>
<div class="card" style="left:944.9px;top:855.5px;width:153.5px;height:178.5px"></div>
<svg class="a" style="left:956.4px;top:863.0px;" width="11" height="15" viewBox="0 0 11 15"><line x1="5" y1="6" x2="5.3" y2="14.5" stroke="#8a8a8a" stroke-width="1.3"/><circle cx="5" cy="4.6" r="4.1" fill="#e0262b"/><circle cx="3.8" cy="3.3" r="1.2" fill="#ff9a9a"/></svg>
<div class="t sb" style="left:972.9px;top:861.8px;font-size:17.5px;letter-spacing:0.025em;-webkit-text-stroke-width:0.8px">4/29(<span style="font-size:16.5px;letter-spacing:0.02em">화</span>)</div>
<div class="t sb" style="right:829.1px;top:864.5px;font-size:14px;color:#7f7e7a;letter-spacing:0.02em">10:00</div>
<div class="a" style="left:952.5px;top:890.7px;width:39.0px;height:21.3px;background:#dbeddb;border-radius:4px"></div>
<div class="t ko" style="left:959.4px;top:894.5px;font-size:14px;color:#1c3829">그룹</div>
<div class="a" style="left:952.5px;top:919.7px;width:73.0px;height:21.1px;background:#fadec9;border-radius:4px"></div>
<div class="t " style="left:959.4px;top:923.5px;font-size:14px;color:#49290e">C<span class="ko">스튜디오</span></div>
<svg class="a" style="left:954.9px;top:952.0px;" width="14" height="14" viewBox="0 0 14 14"><rect x="0.8" y="2.6" width="12.4" height="11" rx="1.2" fill="#4b4841"/><rect x="4.2" y="0.6" width="5.6" height="3.2" rx=".8" fill="#4b4841" stroke="#fff" stroke-width=".6"/></svg>
<div class="t " style="left:975.2px;top:952.5px;font-size:14px;letter-spacing:-0.01em">C <span class="ko">스튜디오 그룹레슨</span></div>
<div class="a" style="left:975.2px;top:966.5px;width:117.0px;height:1.0px;background:#d9d8d4"></div>
<svg class="a" style="left:952.5px;top:980.0px;" width="16" height="16" viewBox="0 0 16 16"><rect x="0" y="0" width="16" height="16" rx="3" fill="#4b80e0"/><path d="M3.5 8.3 L6.7 11.8 L12.8 3.8" stroke="#fff" stroke-width="1.7" fill="none"/></svg>
<div class="t ko" style="left:974.5px;top:981.2px;font-size:14.5px;">완료</div>
<div class="card" style="left:1113.2px;top:855.5px;width:153.5px;height:178.5px"></div>
<svg class="a" style="left:1124.7px;top:863.0px;" width="11" height="15" viewBox="0 0 11 15"><line x1="5" y1="6" x2="5.3" y2="14.5" stroke="#8a8a8a" stroke-width="1.3"/><circle cx="5" cy="4.6" r="4.1" fill="#e0262b"/><circle cx="3.8" cy="3.3" r="1.2" fill="#ff9a9a"/></svg>
<div class="t sb" style="left:1141.2px;top:861.8px;font-size:17.5px;letter-spacing:0.025em;-webkit-text-stroke-width:0.8px">4/30(<span style="font-size:16.5px;letter-spacing:0.02em">수</span>)</div>
<div class="t sb" style="right:660.8px;top:864.5px;font-size:14px;color:#7f7e7a;letter-spacing:0.02em">10:00</div>
<div class="a" style="left:1120.8px;top:890.7px;width:39.0px;height:21.3px;background:#dbeddb;border-radius:4px"></div>
<div class="t ko" style="left:1127.7px;top:894.5px;font-size:14px;color:#1c3829">그룹</div>
<div class="a" style="left:1120.8px;top:919.7px;width:73.0px;height:21.1px;background:#fadec9;border-radius:4px"></div>
<div class="t " style="left:1127.7px;top:923.5px;font-size:14px;color:#49290e">C<span class="ko">스튜디오</span></div>
<svg class="a" style="left:1123.2px;top:952.0px;" width="14" height="14" viewBox="0 0 14 14"><rect x="0.8" y="2.6" width="12.4" height="11" rx="1.2" fill="#4b4841"/><rect x="4.2" y="0.6" width="5.6" height="3.2" rx=".8" fill="#4b4841" stroke="#fff" stroke-width=".6"/></svg>
<div class="t " style="left:1143.5px;top:952.5px;font-size:14px;letter-spacing:-0.01em">C <span class="ko">스튜디오 그룹레슨</span></div>
<div class="a" style="left:1143.5px;top:966.5px;width:117.0px;height:1.0px;background:#d9d8d4"></div>
<svg class="a" style="left:1120.8px;top:980.0px;" width="16" height="16" viewBox="0 0 16 16"><rect x="0" y="0" width="16" height="16" rx="3" fill="#4b80e0"/><path d="M3.5 8.3 L6.7 11.8 L12.8 3.8" stroke="#fff" stroke-width="1.7" fill="none"/></svg>
<div class="t ko" style="left:1142.8px;top:981.2px;font-size:14.5px;">완료</div>
<div class="card" style="left:1281.5px;top:855.5px;width:153.5px;height:178.5px"></div>
<svg class="a" style="left:1293.0px;top:863.0px;" width="11" height="15" viewBox="0 0 11 15"><line x1="5" y1="6" x2="5.3" y2="14.5" stroke="#8a8a8a" stroke-width="1.3"/><circle cx="5" cy="4.6" r="4.1" fill="#e0262b"/><circle cx="3.8" cy="3.3" r="1.2" fill="#ff9a9a"/></svg>
<div class="t sb" style="left:1309.5px;top:861.8px;font-size:17.5px;letter-spacing:0.025em;-webkit-text-stroke-width:0.8px">5/1(<span style="font-size:16.5px;letter-spacing:0.02em">목</span>)</div>
<div class="t sb" style="right:492.5px;top:864.5px;font-size:14px;color:#7f7e7a;letter-spacing:0.02em">10:00</div>
<div class="a" style="left:1289.1px;top:890.7px;width:39.0px;height:21.3px;background:#dbeddb;border-radius:4px"></div>
<div class="t ko" style="left:1296.0px;top:894.5px;font-size:14px;color:#1c3829">그룹</div>
<div class="a" style="left:1289.1px;top:919.7px;width:73.0px;height:21.1px;background:#fadec9;border-radius:4px"></div>
<div class="t " style="left:1296.0px;top:923.5px;font-size:14px;color:#49290e">C<span class="ko">스튜디오</span></div>
<svg class="a" style="left:1291.5px;top:952.0px;" width="14" height="14" viewBox="0 0 14 14"><rect x="0.8" y="2.6" width="12.4" height="11" rx="1.2" fill="#4b4841"/><rect x="4.2" y="0.6" width="5.6" height="3.2" rx=".8" fill="#4b4841" stroke="#fff" stroke-width=".6"/></svg>
<div class="t " style="left:1311.8px;top:952.5px;font-size:14px;letter-spacing:-0.01em">C <span class="ko">스튜디오 그룹레슨</span></div>
<div class="a" style="left:1311.8px;top:966.5px;width:117.0px;height:1.0px;background:#d9d8d4"></div>
<svg class="a" style="left:1289.1px;top:980.0px;" width="16" height="16" viewBox="0 0 16 16"><rect x="0" y="0" width="16" height="16" rx="3" fill="#4b80e0"/><path d="M3.5 8.3 L6.7 11.8 L12.8 3.8" stroke="#fff" stroke-width="1.7" fill="none"/></svg>
<div class="t ko" style="left:1311.1px;top:981.2px;font-size:14.5px;">완료</div>
<div class="card" style="left:1449.7px;top:855.5px;width:153.5px;height:178.5px"></div>
<svg class="a" style="left:1461.2px;top:863.0px;" width="11" height="15" viewBox="0 0 11 15"><line x1="5" y1="6" x2="5.3" y2="14.5" stroke="#8a8a8a" stroke-width="1.3"/><circle cx="5" cy="4.6" r="4.1" fill="#e0262b"/><circle cx="3.8" cy="3.3" r="1.2" fill="#ff9a9a"/></svg>
<div class="t sb" style="left:1477.7px;top:861.8px;font-size:17.5px;letter-spacing:0.025em;-webkit-text-stroke-width:0.8px">5/2(<span style="font-size:16.5px;letter-spacing:0.02em">금</span>)</div>
<div class="t sb" style="right:324.3px;top:864.5px;font-size:14px;color:#7f7e7a;letter-spacing:0.02em">10:00</div>
<div class="a" style="left:1457.3px;top:890.7px;width:39.0px;height:21.3px;background:#dbeddb;border-radius:4px"></div>
<div class="t ko" style="left:1464.2px;top:894.5px;font-size:14px;color:#1c3829">그룹</div>
<div class="a" style="left:1457.3px;top:919.7px;width:73.0px;height:21.1px;background:#fadec9;border-radius:4px"></div>
<div class="t " style="left:1464.2px;top:923.5px;font-size:14px;color:#49290e">C<span class="ko">스튜디오</span></div>
<svg class="a" style="left:1459.7px;top:952.0px;" width="14" height="14" viewBox="0 0 14 14"><rect x="0.8" y="2.6" width="12.4" height="11" rx="1.2" fill="#4b4841"/><rect x="4.2" y="0.6" width="5.6" height="3.2" rx=".8" fill="#4b4841" stroke="#fff" stroke-width=".6"/></svg>
<div class="t " style="left:1480.0px;top:952.5px;font-size:14px;letter-spacing:-0.01em">C <span class="ko">스튜디오 그룹레슨</span></div>
<div class="a" style="left:1480.0px;top:966.5px;width:117.0px;height:1.0px;background:#d9d8d4"></div>
<svg class="a" style="left:1457.3px;top:980.0px;" width="16" height="16" viewBox="0 0 16 16"><rect x="0" y="0" width="16" height="16" rx="3" fill="#4b80e0"/><path d="M3.5 8.3 L6.7 11.8 L12.8 3.8" stroke="#fff" stroke-width="1.7" fill="none"/></svg>
<div class="t ko" style="left:1479.3px;top:981.2px;font-size:14.5px;">완료</div>
<div class="card" style="left:1618.0px;top:855.5px;width:153.5px;height:178.5px"></div>
<svg class="a" style="left:1627.0px;top:864.0px;" width="14" height="14" viewBox="0 0 14 14"><path d="M8.5 1 Q9.2 5.3 13 6 Q9.2 6.7 8.5 11 Q7.8 6.7 4 6 Q7.8 5.3 8.5 1Z" fill="#ffc93a"/><path d="M3.5 7.5 Q3.9 9.6 6 10 Q3.9 10.4 3.5 12.5 Q3.1 10.4 1 10 Q3.1 9.6 3.5 7.5Z" fill="#ffd65a"/><path d="M3 0.5 Q3.3 2 4.5 2.3 Q3.3 2.6 3 4 Q2.7 2.6 1.5 2.3 Q2.7 2 3 0.5Z" fill="#ffd65a"/></svg>
<div class="t sb" style="left:1645.0px;top:862.0px;font-size:17px;letter-spacing:0;word-spacing:0.05em;transform-origin:0 50%;transform:scaleX(0.87)">리포머 심화 스<span style="letter-spacing:0.05em">...</span></div>
<div class="t ko" style="left:1625.0px;top:894.5px;font-size:14px;">삼성역 세미나룸</div>
<svg class="a" style="left:1625.5px;top:922.5px;" width="16" height="16" viewBox="0 0 16 16"><rect x="0" y="0" width="16" height="16" rx="3" fill="#4b80e0"/><path d="M3.5 8.3 L6.7 11.8 L12.8 3.8" stroke="#fff" stroke-width="1.7" fill="none"/></svg>
<div class="t ko" style="left:1647.5px;top:923.8px;font-size:14.5px;">완료</div>
<div class="card" style="left:776.6px;top:1040.8px;width:153.5px;height:179px"></div>
<svg class="a" style="left:788.1px;top:1048.0px;" width="11" height="15" viewBox="0 0 11 15"><line x1="5" y1="6" x2="5.3" y2="14.5" stroke="#8a8a8a" stroke-width="1.3"/><circle cx="5" cy="4.6" r="4.1" fill="#e0262b"/><circle cx="3.8" cy="3.3" r="1.2" fill="#ff9a9a"/></svg>
<div class="t sb" style="left:804.6px;top:1046.8px;font-size:17.5px;letter-spacing:0.025em;-webkit-text-stroke-width:0.8px">4/28(<span style="font-size:16.5px;letter-spacing:0.02em">월</span>)</div>
<div class="t sb" style="right:997.4px;top:1049.5px;font-size:14px;color:#7f7e7a;letter-spacing:0.02em">18:00</div>
<div class="a" style="left:784.2px;top:1075.8px;width:39.0px;height:21.3px;background:#dbeddb;border-radius:4px"></div>
<div class="card" style="left:944.9px;top:1040.8px;width:153.5px;height:179px"></div>
<svg class="a" style="left:956.4px;top:1048.0px;" width="11" height="15" viewBox="0 0 11 15"><line x1="5" y1="6" x2="5.3" y2="14.5" stroke="#8a8a8a" stroke-width="1.3"/><circle cx="5" cy="4.6" r="4.1" fill="#e0262b"/><circle cx="3.8" cy="3.3" r="1.2" fill="#ff9a9a"/></svg>
<div class="t sb" style="left:972.9px;top:1046.8px;font-size:17.5px;letter-spacing:0.025em;-webkit-text-stroke-width:0.8px">4/29(<span style="font-size:16.5px;letter-spacing:0.02em">화</span>)</div>
<div class="t sb" style="right:829.1px;top:1049.5px;font-size:14px;color:#7f7e7a;letter-spacing:0.02em">10:00</div>
<div class="a" style="left:952.5px;top:1075.8px;width:39.0px;height:21.3px;background:#e3e2e0;border-radius:4px"></div>
<div class="card" style="left:1113.2px;top:1040.8px;width:153.5px;height:179px"></div>
<svg class="a" style="left:1124.7px;top:1048.0px;" width="11" height="15" viewBox="0 0 11 15"><line x1="5" y1="6" x2="5.3" y2="14.5" stroke="#8a8a8a" stroke-width="1.3"/><circle cx="5" cy="4.6" r="4.1" fill="#e0262b"/><circle cx="3.8" cy="3.3" r="1.2" fill="#ff9a9a"/></svg>
<div class="t sb" style="left:1141.2px;top:1046.8px;font-size:17.5px;letter-spacing:0.025em;-webkit-text-stroke-width:0.8px">4/30(<span style="font-size:16.5px;letter-spacing:0.02em">수</span>)</div>
<div class="t sb" style="right:660.8px;top:1049.5px;font-size:14px;color:#7f7e7a;letter-spacing:0.02em">18:00</div>
<div class="a" style="left:1120.8px;top:1075.8px;width:39.0px;height:21.3px;background:#dbeddb;border-radius:4px"></div>
<div class="card" style="left:1281.5px;top:1040.8px;width:153.5px;height:179px"></div>
<svg class="a" style="left:1293.0px;top:1048.0px;" width="11" height="15" viewBox="0 0 11 15"><line x1="5" y1="6" x2="5.3" y2="14.5" stroke="#8a8a8a" stroke-width="1.3"/><circle cx="5" cy="4.6" r="4.1" fill="#e0262b"/><circle cx="3.8" cy="3.3" r="1.2" fill="#ff9a9a"/></svg>
<div class="t sb" style="left:1309.5px;top:1046.8px;font-size:17.5px;letter-spacing:0.025em;-webkit-text-stroke-width:0.8px">5/1(<span style="font-size:16.5px;letter-spacing:0.02em">목</span>)</div>
<div class="t sb" style="right:492.5px;top:1049.5px;font-size:14px;color:#7f7e7a;letter-spacing:0.02em">18:00</div>
<div class="a" style="left:1289.1px;top:1075.8px;width:39.0px;height:21.3px;background:#dbeddb;border-radius:4px"></div>
<div class="card" style="left:1449.7px;top:1040.8px;width:153.5px;height:179px"></div>
<svg class="a" style="left:1461.2px;top:1048.0px;" width="11" height="15" viewBox="0 0 11 15"><line x1="5" y1="6" x2="5.3" y2="14.5" stroke="#8a8a8a" stroke-width="1.3"/><circle cx="5" cy="4.6" r="4.1" fill="#e0262b"/><circle cx="3.8" cy="3.3" r="1.2" fill="#ff9a9a"/></svg>
<div class="t sb" style="left:1477.7px;top:1046.8px;font-size:17.5px;letter-spacing:0.025em;-webkit-text-stroke-width:0.8px">5/2(<span style="font-size:16.5px;letter-spacing:0.02em">금</span>)</div>
<div class="t sb" style="right:324.3px;top:1049.5px;font-size:14px;color:#7f7e7a;letter-spacing:0.02em">10:00</div>
<div class="a" style="left:1457.3px;top:1075.8px;width:39.0px;height:21.3px;background:#e3e2e0;border-radius:4px"></div>
<div class="card" style="left:1618.0px;top:1040.8px;width:153.5px;height:179px"></div>
<svg class="a" style="left:1629.5px;top:1048.0px;" width="11" height="15" viewBox="0 0 11 15"><line x1="5" y1="6" x2="5.3" y2="14.5" stroke="#8a8a8a" stroke-width="1.3"/><circle cx="5" cy="4.6" r="4.1" fill="#e0262b"/><circle cx="3.8" cy="3.3" r="1.2" fill="#ff9a9a"/></svg>
<div class="t sb" style="left:1646.0px;top:1046.8px;font-size:17.5px;letter-spacing:0.025em;-webkit-text-stroke-width:0.8px">5/3(<span style="font-size:16.5px;letter-spacing:0.02em">토</span>)</div>
<div class="t sb" style="right:156.0px;top:1049.5px;font-size:14px;color:#7f7e7a;letter-spacing:0.02em">10:00</div>
<div class="a" style="left:1625.6px;top:1075.8px;width:39.0px;height:21.3px;background:#dbeddb;border-radius:4px"></div>
<div class="a" style="left:1857.5px;top:1017.5px;width:44px;height:44px;border-radius:50%;background:#fff;box-shadow:0 0 0 1px rgba(15,15,15,.06),0 3px 12px rgba(15,15,15,.07)"></div>
<svg class="a" style="left:1860.0px;top:1020.0px;" width="40" height="40" viewBox="0 0 40 40"><path d="M11.1 11.5Q16 6.5 20.9 11.3M21.1 11.9Q25.5 7 30.4 12.6M21.3 11.9L12.6 29.3L19.8 30.4" stroke="#111" stroke-width="1.7" fill="none" stroke-linecap="round"/><circle cx="16.3" cy="15.2" r="1.7" fill="#111"/><circle cx="24.1" cy="16.3" r="1.7" fill="#111"/></svg>
</body>
</html>
